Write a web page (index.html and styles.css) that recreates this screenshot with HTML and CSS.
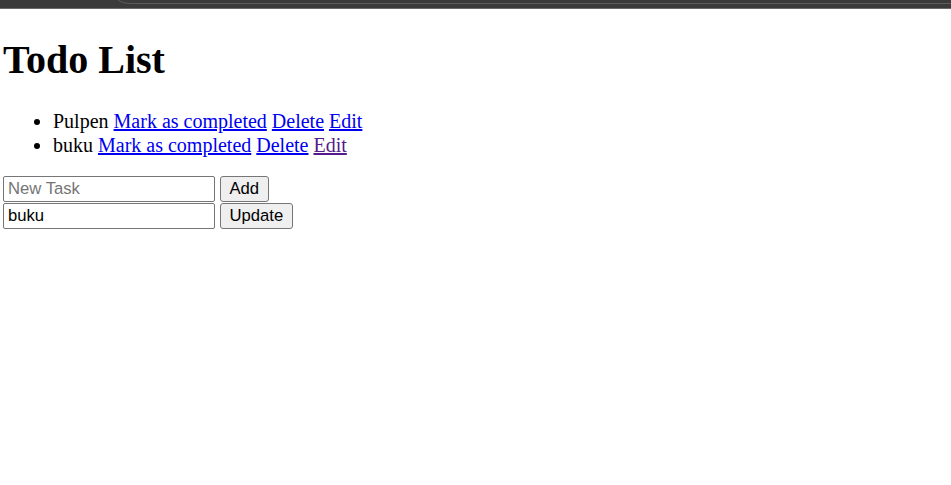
FILE: index.html
```html
<!DOCTYPE html>
<html lang="en">
<head>
<meta charset="utf-8">
<title>Todo List</title>
<link rel="stylesheet" href="styles.css">
</head>
<body>
<div class="chrome">
  <svg class="chrome-edge" width="951" height="9" viewBox="0 0 951 9">
    <path d="M118 0 Q122 3.5 130 3.5 L951 3.5" fill="none" stroke="#5c5c5c" stroke-width="1"/>
  </svg>
</div>
<main class="page">
  <h1 class="title">Todo List</h1>
  <ul class="todos">
    <li>Pulpen <a href="#" class="link">Mark as completed</a> <a href="#" class="link">Delete</a> <a href="#" class="link">Edit</a></li>
    <li>buku <a href="#" class="link">Mark as completed</a> <a href="#" class="link">Delete</a> <a href="#" class="link visited">Edit</a></li>
  </ul>
  <form class="row">
    <input class="field" type="text" placeholder="New Task">
    <button class="btn" type="button">Add</button>
  </form>
  <form class="row">
    <input class="field" type="text" value="buku">
    <button class="btn" type="button">Update</button>
  </form>
</main>
</body>
</html>
```

FILE: styles.css
```css
html, body {
  margin: 0;
  padding: 0;
  background: #ffffff;
}

body {
  font-family: "Liberation Serif", "Times New Roman", serif;
  font-size: 20px;
  color: #000000;
}

.chrome {
  height: 9px;
  background: #3b3b3b;
  border-bottom: 1px solid #6a6a6a;
  box-sizing: border-box;
  overflow: hidden;
}

.chrome-edge {
  display: block;
}

.page {
  padding: 0 3px;
}

.title {
  font-size: 40px;
  font-weight: bold;
  line-height: 46px;
  margin: 28px 0 0 0;
}

.todos {
  margin: 26px 0 19px;
  padding-left: 50px;
  line-height: 24px;
}

.link {
  color: #0000ee;
  text-decoration: underline;
}

.link.visited {
  color: #551a8b;
}

.row {
  display: flex;
  align-items: flex-start;
  gap: 5px;
  margin: 0;
  height: 26.5px;
}

.field {
  box-sizing: border-box;
  width: 212px;
  height: 26px;
  margin: 0;
  padding: 1px 4px;
  border: 1px solid #767676;
  border-radius: 2px;
  font-family: "Liberation Sans", Arial, sans-serif;
  font-size: 16.67px;
  color: #000000;
  background: #ffffff;
}

.field::placeholder {
  color: #757575;
}

.btn {
  box-sizing: border-box;
  height: 26px;
  margin: 0;
  padding: 0 8.5px;
  border: 1px solid #767676;
  border-radius: 3px;
  background: #efefef;
  font-family: "Liberation Sans", Arial, sans-serif;
  font-size: 16.67px;
  color: #000000;
}
```
